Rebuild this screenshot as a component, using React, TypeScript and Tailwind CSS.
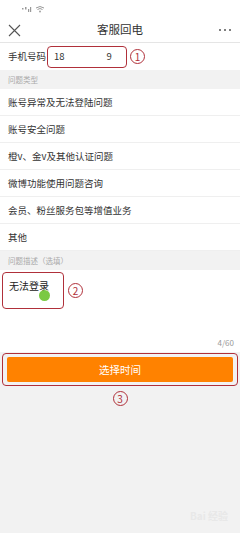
import React from "react";

const TYPES = [
  "账号异常及无法登陆问题",
  "账号安全问题",
  "橙v、金v及其他认证问题",
  "微博功能使用问题咨询",
  "会员、粉丝服务包等增值业务",
  "其他",
];

function Circled({ n }: { n: string }) {
  return (
    <span className="flex h-[15px] w-[15px] items-center justify-center rounded-full border border-[#b0303a] text-[10px] leading-none text-[#b0303a]">
      {n}
    </span>
  );
}

export default function App() {
  return (
    <div
      className="flex h-[533px] w-[240px] flex-col bg-[#f2f2f2] text-[#333]"
      style={{ fontFamily: '"Noto Sans CJK SC", "Noto Sans", sans-serif' }}
    >
      {/* status bar */}
      <div className="flex h-[18px] items-center bg-white pl-[22px]">
        <svg width="24" height="8" viewBox="0 0 24 8">
          <rect x="0" y="3" width="1.5" height="1.5" fill="#999" />
          <rect x="3" y="2" width="1.5" height="2.5" fill="#999" />
          <rect x="6" y="4" width="1.2" height="3" fill="#999" />
          <rect x="8" y="2" width="1.2" height="5" fill="#999" />
          <path d="M14 3 Q18 0 22 3" stroke="#999" strokeWidth="1" fill="none" />
          <path d="M15.5 4.5 Q18 2.5 20.5 4.5" stroke="#999" strokeWidth="1" fill="none" />
          <circle cx="18" cy="6.5" r="0.9" fill="#999" />
        </svg>
      </div>

      {/* header */}
      <div className="flex h-[25px] items-center justify-between border-b border-[#e5e5e5] bg-white px-[8px]">
        <svg width="13" height="13" viewBox="0 0 13 13">
          <path d="M1 1 L12 12 M12 1 L1 12" stroke="#555" strokeWidth="1.1" />
        </svg>
        <span className="text-[11.5px] text-[#333]">客服回电</span>
        <span className="flex gap-[3px] pr-[1px]">
          <span className="h-[2px] w-[2px] rounded-full bg-[#555]" />
          <span className="h-[2px] w-[2px] rounded-full bg-[#555]" />
          <span className="h-[2px] w-[2px] rounded-full bg-[#555]" />
        </span>
      </div>

      {/* phone row */}
      <div className="flex h-[27px] items-center bg-white pl-[8px]">
        <span className="w-[39px] shrink-0 whitespace-nowrap text-[9.5px]">手机号码</span>
        <div className="flex h-[22px] w-[80px] items-center rounded-[4px] border-[1.5px] border-[#b0303a] pl-[6px] text-[9.5px]">
          <span>18</span>
          <span className="ml-[42px]">9</span>
        </div>
        <span className="ml-[3px]">
          <Circled n="1" />
        </span>
      </div>

      {/* section header */}
      <div className="flex h-[19px] items-center px-[8px] text-[7.5px] text-[#aaa]">问题类型</div>

      {/* options */}
      <div className="flex flex-col bg-white">
        {TYPES.map((t) => (
          <div key={t} className="flex h-[27px] items-center border-b-[1.5px] border-[#efefef] px-[8px] text-[9.5px]">
            {t}
          </div>
        ))}
      </div>

      {/* description header */}
      <div className="flex h-[19px] items-center px-[8px] text-[7.5px] text-[#aaa]">问题描述（选填）</div>

      {/* textarea */}
      <div className="flex h-[82px] flex-col bg-white">
        <div className="flex items-start pl-[2px] pt-[2px]">
          <div className="relative h-[37px] w-[62px] rounded-[4px] border-[1.5px] border-[#b0303a] pl-[6px] pt-[5px] text-[10px] text-[#222]">
            无法登录
            <span className="absolute left-[36px] top-[17px] h-[11px] w-[11px] rounded-full bg-[#7ac943]" />
          </div>
          <span className="ml-[4px] mt-[11px]">
            <Circled n="2" />
          </span>
        </div>
        <div className="mt-auto pb-[3px] pr-[6px] text-right text-[8px] text-[#999]">4/60</div>
      </div>

      {/* button */}
      <div className="mt-[1px] px-[2px]">
        <div className="rounded-[4px] border-[1.5px] border-[#b0303a] px-[4px] py-[3px]">
          <div className="flex h-[25px] items-center justify-center rounded-[2px] bg-[#ff8200] text-[10.5px] text-white">
            选择时间
          </div>
        </div>
      </div>
      <div className="mt-[5px] flex justify-center">
        <Circled n="3" />
      </div>

      {/* watermark */}
      <div className="mt-auto flex justify-end pb-[10px] pr-[12px]">
        <span className="text-[10px] font-bold text-[#e8e8e8]">Bai 经验</span>
      </div>
    </div>
  );
}
